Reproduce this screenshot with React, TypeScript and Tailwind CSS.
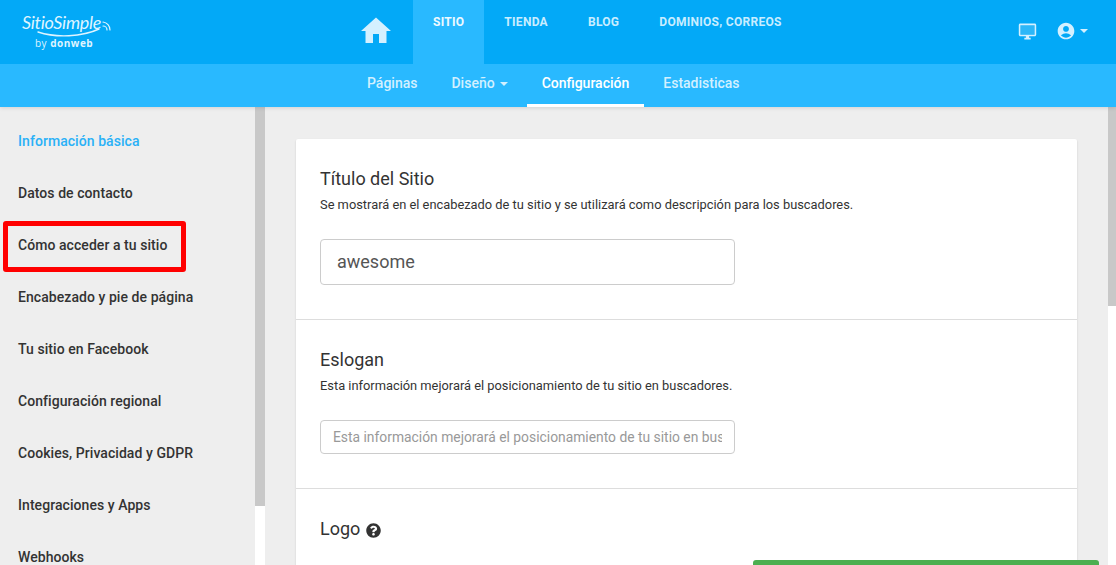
import { MdAccountCircle, MdHome } from "react-icons/md";
import { FaQuestionCircle } from "react-icons/fa";

const SIDE_ITEMS = [
  "Información básica",
  "Datos de contacto",
  "Cómo acceder a tu sitio",
  "Encabezado y pie de página",
  "Tu sitio en Facebook",
  "Configuración regional",
  "Cookies, Privacidad y GDPR",
  "Integraciones y Apps",
  "Webhooks",
];

function Caret() {
  return (
    <span className="block w-0 h-0 border-x-[4px] border-x-transparent border-t-[4px] border-t-current" />
  );
}

function Logo() {
  return (
    <div className="relative w-[338px] h-full shrink-0 text-[#dff4ff]">
      <span className="absolute left-[22px] top-[10px] font-['Lato'] italic text-[18px] leading-6 tracking-[-0.3px]">
        SitioSimple
      </span>
      <svg
        className="absolute left-[36px] top-[18px]"
        width="76"
        height="20"
        viewBox="0 0 76 20"
        fill="none"
        stroke="currentColor"
        strokeLinecap="round"
      >
        <path d="M2 14 C 20 20, 46 19, 63 11" strokeWidth="1.4" />
        <path d="M67 8 a4 4 0 0 1 4 4" strokeWidth="1.2" />
        <path d="M67 4 a8 8 0 0 1 7 8" strokeWidth="1.2" />
      </svg>
      <span className="absolute left-[35px] top-[37px] font-['Open_Sans'] text-[10px] leading-3 tracking-[0.5px]">
        by <span className="font-bold">donweb</span>
      </span>
    </div>
  );
}

function Monitor() {
  return (
    <svg className="w-[19px] h-[19px]" viewBox="0 0 24 24" fill="currentColor">
      <rect x="3" y="4" width="18" height="12" opacity="0.2" />
      <path d="M21 2H3c-1.1 0-2 .9-2 2v12c0 1.1.9 2 2 2h7v2H8v2h8v-2h-2v-2h7c1.1 0 2-.9 2-2V4c0-1.1-.9-2-2-2zm0 14H3V4h18v12z" />
    </svg>
  );
}

function Header() {
  return (
    <header className="relative z-10 shrink-0 font-['Roboto'] shadow-[0_1px_4px_rgba(0,0,0,0.12)]">
      <div className="flex h-16 bg-[#03a9f7]">
        <Logo />
        <nav className="flex text-xs font-bold tracking-[0.28px] text-[#c9edff]">
          <a className="w-[75px] flex justify-center pt-[13px]">
            <MdHome className="w-9 h-9 text-[#d4f0ff]" />
          </a>
          <a className="px-5 pt-[14px] bg-[#29b9ff] text-[#eef9ff]">SITIO</a>
          <a className="px-5 pt-[14px]">TIENDA</a>
          <a className="px-5 pt-[14px]">BLOG</a>
          <a className="px-5 pt-[14px]">DOMINIOS, CORREOS</a>
        </nav>
        <div className="ml-auto pr-[28px] pb-[2px] flex items-center text-[#d4f0ff]">
          <Monitor />
          <MdAccountCircle className="w-5 h-5 ml-[19px]" />
          <span className="ml-[4px]">
            <Caret />
          </span>
        </div>
      </div>
      <nav className="flex gap-1 h-[43px] pl-[352px] bg-[#29b9ff] text-sm font-medium text-[#d2f0ff]">
        <a className="px-[15px] pt-[9px]">Páginas</a>
        <a className="px-[15px] pt-[9px] flex gap-[5px]">
          Diseño
          <span className="pt-[9px]">
            <Caret />
          </span>
        </a>
        <a className="px-[15px] pt-[9px] text-white border-b-[3px] border-white">
          Configuración
        </a>
        <a className="px-[15px] pt-[9px]">Estadisticas</a>
      </nav>
    </header>
  );
}

function Sidebar() {
  return (
    <div className="relative flex w-[265px] shrink-0 bg-white">
      <ul className="w-[255px] bg-[#eeeeee] pt-2 text-sm font-medium text-[#333333] tracking-[0.06px]">
        {SIDE_ITEMS.map((item, i) => (
          <li
            key={item}
            className={`h-[52px] pl-[18px] flex items-center ${
              i === 0 ? "text-[#2ab1f7]" : ""
            }`}
          >
            {item}
          </li>
        ))}
      </ul>
      <div className="w-[10px]">
        <div className="h-[399px] bg-[#c8c8c8]" />
      </div>
      {/* Red marker drawn over the screenshot */}
      <div className="absolute left-[3px] top-[114px] w-[183px] h-[51px] border-[5px] border-[#ff0000] rounded-[3px]" />
    </div>
  );
}

function Section({
  title,
  hint,
  children,
  className,
}: {
  title: string;
  hint: string;
  children: React.ReactNode;
  className: string;
}) {
  return (
    <section className={`border-b border-[#dddddd] px-6 ${className}`}>
      <h2 className="text-lg leading-[26px] text-[#333333]">{title}</h2>
      <p className="mt-[4px] text-[12.85px] leading-[18px] text-[#333333]">{hint}</p>
      {children}
    </section>
  );
}

function Main() {
  return (
    <main className="flex-1 min-w-0 flex bg-white">
      <div className="flex-1 min-w-0 bg-[#eeeeee] pt-8 pl-[31px] pr-[31px]">
        <div className="bg-white rounded-[2px] shadow-[0_1px_2px_rgba(0,0,0,0.16)] h-[600px]">
          <Section
            title="Título del Sitio"
            hint="Se mostrará en el encabezado de tu sitio y se utilizará como descripción para los buscadores."
            className="h-[181px] pt-[27px]"
          >
            <input
              readOnly
              value="awesome"
              className="mt-[25px] block w-[415px] h-[46px] px-4 pb-[2px] text-lg text-[#555555] border border-[#cccccc] rounded-[4px] outline-none"
            />
          </Section>
          <Section
            title="Eslogan"
            hint="Esta información mejorará el posicionamiento de tu sitio en buscadores."
            className="h-[169px] pt-[27px]"
          >
            <input
              readOnly
              placeholder="Esta información mejorará el posicionamiento de tu sitio en buscadores."
              className="mt-[25px] block w-[415px] h-[34px] px-3 text-[13.85px] text-[#555555] placeholder:text-[#999999] border border-[#cccccc] rounded-[4px] outline-none"
            />
          </Section>
          <div className="px-6 pt-[27px] flex items-center gap-[6px]">
            <h2 className="text-lg leading-[26px] text-[#333333]">Logo</h2>
            <FaQuestionCircle className="w-[15px] h-[15px] mt-[2px] text-[#333333]" />
          </div>
        </div>
      </div>
      <div className="w-2 shrink-0">
        <div className="h-[199px] bg-[#c8c8c8]" />
      </div>
    </main>
  );
}

export default function App() {
  return (
    <div className="relative w-[1116px] h-[565px] overflow-hidden flex flex-col font-['Roboto']">
      <Header />
      <div className="flex flex-1 min-h-0">
        <Sidebar />
        <Main />
      </div>
      {/* Toast peeking in from the bottom edge */}
      <div className="absolute left-[753px] top-[560px] w-[346px] h-10 bg-[#4caf50] rounded-[3px]" />
    </div>
  );
}
